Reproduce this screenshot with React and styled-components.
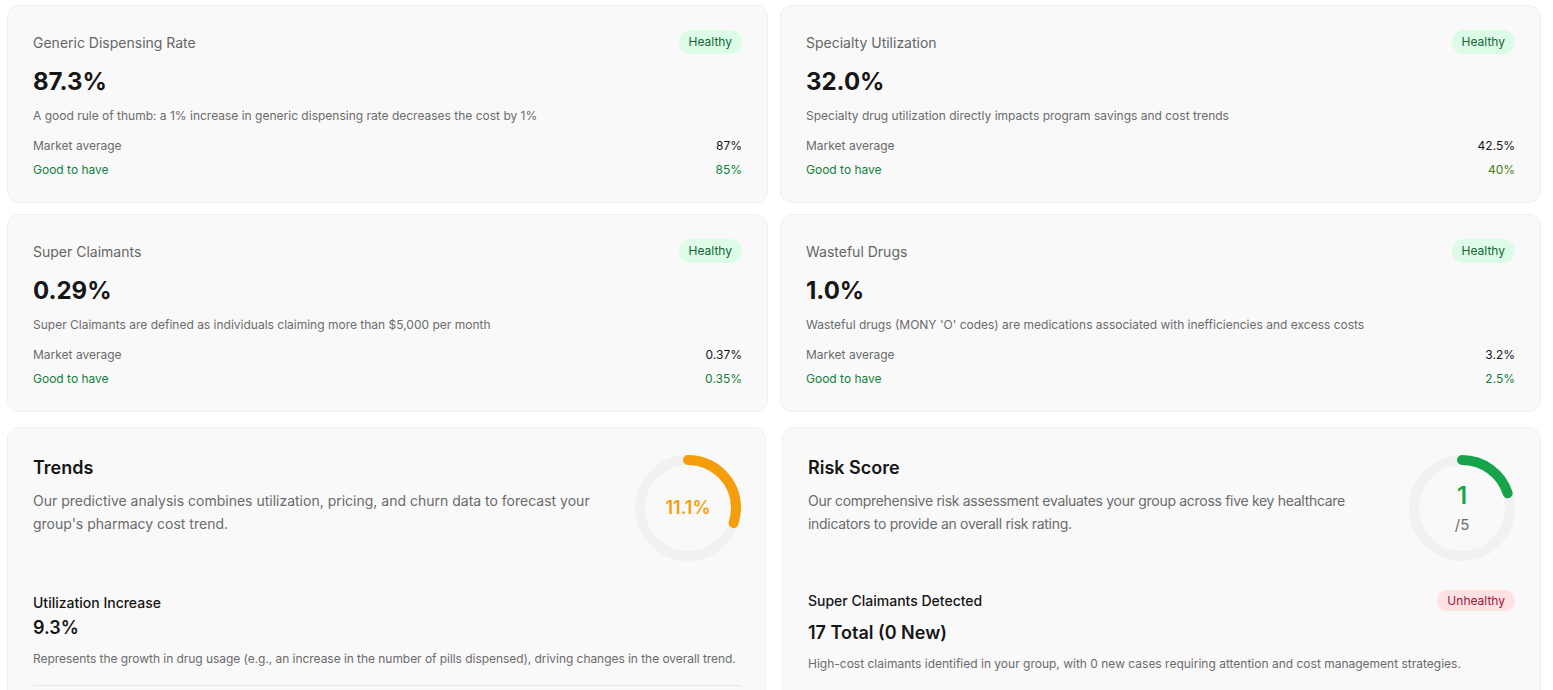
import React from 'react';
import styled, { createGlobalStyle } from 'styled-components';

const GlobalStyle = createGlobalStyle`
  body {
    margin: 0;
    background: #ffffff;
    font-family: Inter, "Noto Sans", sans-serif;
    color: #1a1a1a;
  }
`;

const Page = styled.div`
  padding: 5px 12px 0 7px;
  display: flex;
  flex-direction: column;
  gap: 15px;
`;

const MetricGrid = styled.div`
  display: grid;
  grid-template-columns: 1fr 1fr;
  column-gap: 12px;
  row-gap: 11px;
`;

const BottomGrid = styled.div`
  display: grid;
  grid-template-columns: 1fr 1fr;
  column-gap: 16px;
`;

const Card = styled.div`
  background: #f9f9f9;
  border: 1px solid #f0f0f0;
  border-radius: 12px;
  padding: ${(p) => p.$pad || '24px 25px 20px'};
  box-sizing: border-box;
`;

const CardHeader = styled.div`
  display: flex;
  justify-content: space-between;
  align-items: center;
  height: 24px;
`;

const CardTitle = styled.span`
  font-size: 14px;
  color: #666666;
`;

const Badge = styled.span`
  font-size: 12px;
  line-height: ${(p) => (p.$bad ? '21px' : '24px')};
  padding: 0 10px;
  border-radius: 12px;
  background: ${(p) => (p.$bad ? '#fee2e2' : '#dcfce7')};
  color: ${(p) => (p.$bad ? '#9f1239' : '#166534')};
`;

const BigValue = styled.div`
  font-size: 24px;
  font-weight: 700;
  color: #161616;
  margin-top: 13px;
  line-height: 30px;
`;

const Desc = styled.p`
  margin: 10px 0 9px;
  font-size: 12px;
  line-height: 18px;
  color: #6b6b6b;
`;

const StatRow = styled.div`
  display: flex;
  justify-content: space-between;
  font-size: 12px;
  line-height: 24px;
  color: ${(p) => (p.$good ? '#15803d' : '#6b6b6b')};
`;

const StatValue = styled.span`
  color: ${(p) => p.$color || '#161616'};
`;

const TopRow = styled.div`
  display: flex;
  justify-content: space-between;
  align-items: flex-start;
  gap: 20px;
`;

const Intro = styled.div`
  flex: 1;
  padding-top: 1px;
`;

const SectionTitle = styled.h2`
  margin: 0;
  font-size: 18px;
  font-weight: 600;
  line-height: 28px;
  color: #161616;
`;

const SectionText = styled.p`
  margin: 7px 0 0;
  font-size: 14px;
  line-height: 23px;
  color: #6b6b6b;
  letter-spacing: ${(p) => (p.$tight ? '-0.3px' : 'normal')};
`;

const GaugeBox = styled.div`
  position: relative;
  width: 106px;
  height: 106px;
  flex-shrink: 0;
  margin-top: 2px;
`;

const GaugeLabel = styled.div`
  position: absolute;
  inset: 0;
  display: flex;
  flex-direction: column;
  align-items: center;
  justify-content: center;
`;

const GaugeMain = styled.span`
  font-size: ${(p) => p.$size || '18px'};
  font-weight: 600;
  color: ${(p) => p.$color};
  line-height: 1.2;
`;

const GaugeSub = styled.span`
  font-size: 15px;
  color: #6b6b6b;
  margin-top: 4px;
`;

const Detail = styled.div`
  margin-top: ${(p) => p.$top || '30px'};
`;

const DetailHead = styled.div`
  display: flex;
  justify-content: space-between;
  align-items: center;
`;

const DetailTitle = styled.div`
  font-size: 14px;
  font-weight: 500;
  line-height: 20px;
  color: #161616;
`;

const DetailValue = styled.div`
  font-size: 18px;
  font-weight: 600;
  line-height: 24px;
  color: #161616;
  margin-top: ${(p) => p.$top || '3px'};
`;

const DetailText = styled.p`
  margin: 10px 0 0;
  font-size: 12px;
  line-height: 18px;
  color: #6b6b6b;
  letter-spacing: ${(p) => (p.$tight ? '-0.05px' : 'normal')};
`;

const Divider = styled.div`
  height: 1px;
  background: #e8e8e8;
  margin-top: 17px;
`;

const Gauge = ({ fraction, color, children }) => {
  const r = 48;
  const c = 2 * Math.PI * r;
  return (
    <GaugeBox>
      <svg width="106" height="106" viewBox="0 0 106 106">
        <circle cx="53" cy="53" r={r} fill="none" stroke="#f1f1f1" strokeWidth="10" />
        <circle
          cx="53"
          cy="53"
          r={r}
          fill="none"
          stroke={color}
          strokeWidth="10"
          strokeLinecap="round"
          strokeDasharray={`${c * fraction} ${c}`}
          transform="rotate(-90 53 53)"
        />
      </svg>
      <GaugeLabel>{children}</GaugeLabel>
    </GaugeBox>
  );
};

const metrics = [
  {
    title: 'Generic Dispensing Rate',
    value: '87.3%',
    desc: 'A good rule of thumb: a 1% increase in generic dispensing rate decreases the cost by 1%',
    market: '87%',
    good: '85%',
  },
  {
    title: 'Specialty Utilization',
    value: '32.0%',
    desc: 'Specialty drug utilization directly impacts program savings and cost trends',
    market: '42.5%',
    good: '40%',
    goodColor: '#4d7c0f',
  },
  {
    title: 'Super Claimants',
    value: '0.29%',
    desc: 'Super Claimants are defined as individuals claiming more than $5,000 per month',
    market: '0.37%',
    good: '0.35%',
  },
  {
    title: 'Wasteful Drugs',
    value: '1.0%',
    desc: "Wasteful drugs (MONY 'O' codes) are medications associated with inefficiencies and excess costs",
    market: '3.2%',
    good: '2.5%',
  },
];

const MetricCard = ({ m }) => (
  <Card>
    <CardHeader>
      <CardTitle>{m.title}</CardTitle>
      <Badge>Healthy</Badge>
    </CardHeader>
    <BigValue>{m.value}</BigValue>
    <Desc>{m.desc}</Desc>
    <StatRow>
      <span>Market average</span>
      <StatValue>{m.market}</StatValue>
    </StatRow>
    <StatRow $good>
      <span>Good to have</span>
      <StatValue $color={m.goodColor || '#15803d'}>{m.good}</StatValue>
    </StatRow>
  </Card>
);

const App = () => {
  return (
    <>
      <GlobalStyle />
      <Page>
        <MetricGrid>
          {metrics.map((m) => (
            <MetricCard key={m.title} m={m} />
          ))}
        </MetricGrid>
        <BottomGrid>
          <Card $pad="25px 24px 40px 25px">
            <TopRow>
              <Intro>
                <SectionTitle>Trends</SectionTitle>
                <SectionText>
                  Our predictive analysis combines utilization, pricing, and churn data to forecast your group's pharmacy cost trend.
                </SectionText>
              </Intro>
              <Gauge fraction={0.3} color="#f59e0b">
                <GaugeMain $color="#f59e0b">11.1%</GaugeMain>
              </Gauge>
            </TopRow>
            <Detail $top="32px">
              <DetailTitle>Utilization Increase</DetailTitle>
              <DetailValue $top="3px">9.3%</DetailValue>
              <DetailText $tight>
                Represents the growth in drug usage (e.g., an increase in the number of pills dispensed), driving changes in the overall trend.
              </DetailText>
              <Divider />
            </Detail>
          </Card>
          <Card $pad="25px 25px 40px 25px">
            <TopRow>
              <Intro>
                <SectionTitle>Risk Score</SectionTitle>
                <SectionText $tight>
                  Our comprehensive risk assessment evaluates your group across five key healthcare indicators to provide an overall risk rating.
                </SectionText>
              </Intro>
              <Gauge fraction={0.2} color="#16a34a">
                <GaugeMain $size="24px" $color="#16a34a">1</GaugeMain>
                <GaugeSub>/5</GaugeSub>
              </Gauge>
            </TopRow>
            <Detail $top="29px">
              <DetailHead>
                <DetailTitle>Super Claimants Detected</DetailTitle>
                <Badge $bad>Unhealthy</Badge>
              </DetailHead>
              <DetailValue $top="10px">17 Total (0 New)</DetailValue>
              <DetailText>
                High-cost claimants identified in your group, with 0 new cases requiring attention and cost management strategies.
              </DetailText>
            </Detail>
          </Card>
        </BottomGrid>
      </Page>
    </>
  );
};

export default App;
